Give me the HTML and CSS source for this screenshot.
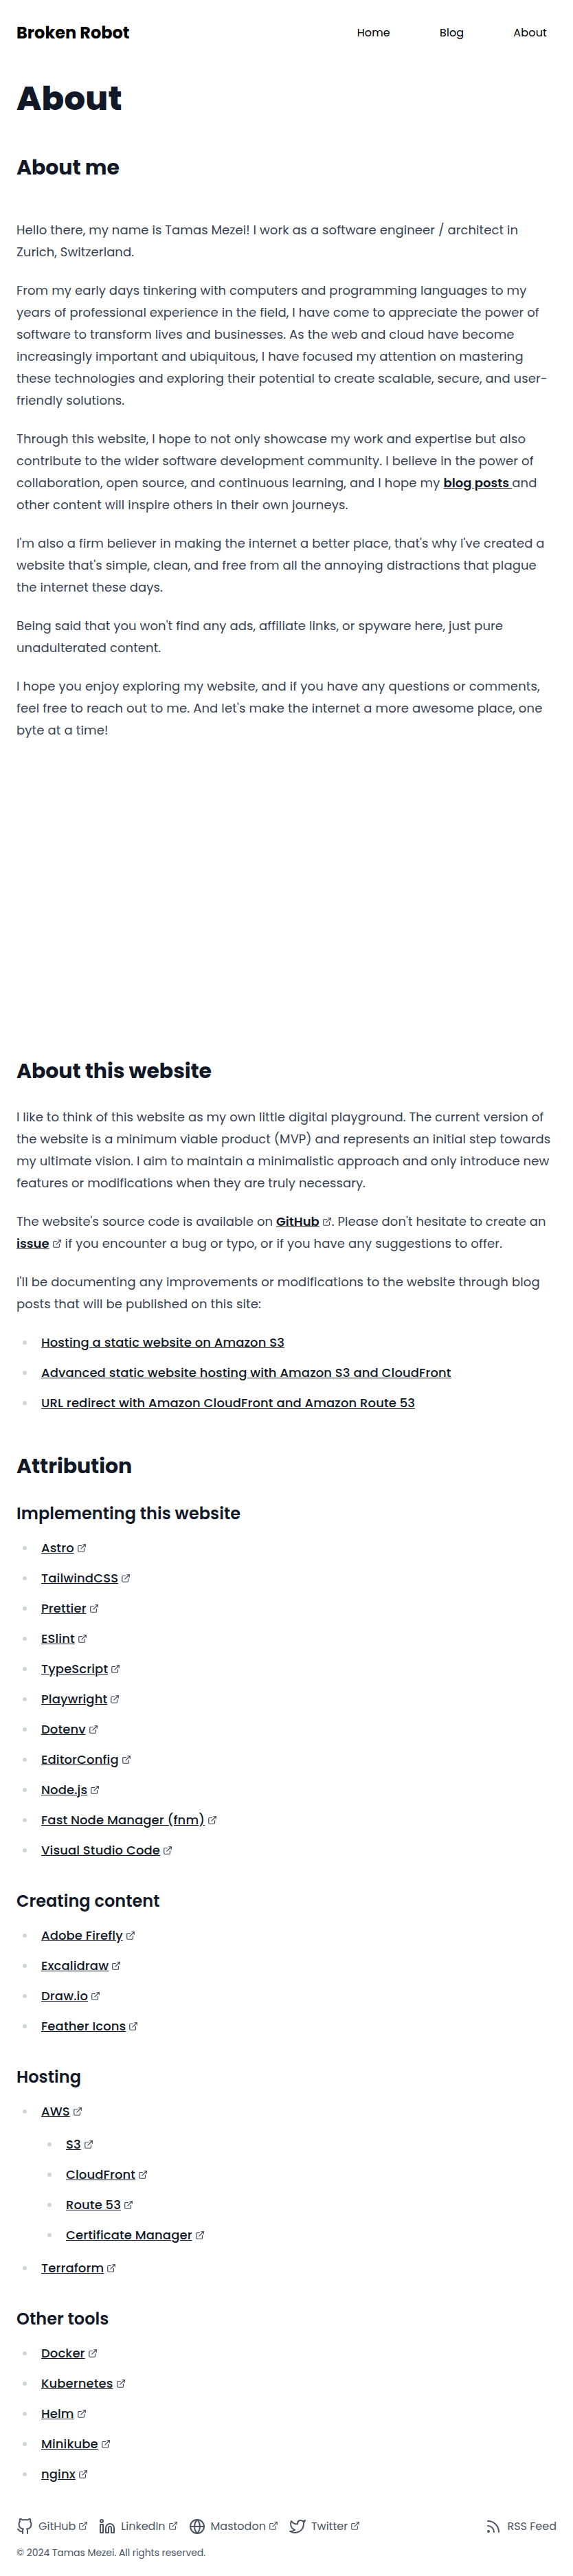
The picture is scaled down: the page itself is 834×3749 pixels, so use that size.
FILE: index.html
```html
<!DOCTYPE html>
<html lang="en">
<head>
<meta charset="utf-8">
<meta name="viewport" content="width=device-width, initial-scale=1">
<title>About | Broken Robot</title>
<link rel="stylesheet" href="styles.css">
</head>
<body>
<svg class="sprite" aria-hidden="true">
  <symbol id="external" viewBox="0 0 24 24"><path d="M18 13v6a2 2 0 0 1-2 2H5a2 2 0 0 1-2-2V8a2 2 0 0 1 2-2h6"/><path d="M15 3h6v6"/><path d="M10 14 21 3"/></symbol>
  <symbol id="github" viewBox="0 0 24 24"><path d="M9 19c-5 1.5-5-2.5-7-3m14 6v-3.87a3.37 3.37 0 0 0-.94-2.61c3.14-.35 6.44-1.54 6.44-7A5.44 5.44 0 0 0 20 4.77 5.07 5.07 0 0 0 19.91 1S18.73.65 16 2.48a13.38 13.38 0 0 0-7 0C6.27.65 5.09 1 5.09 1A5.07 5.07 0 0 0 5 4.77a5.44 5.44 0 0 0-1.5 3.78c0 5.42 3.3 6.61 6.44 7A3.37 3.37 0 0 0 9 18.13V22"/></symbol>
  <symbol id="linkedin" viewBox="0 0 24 24"><path d="M16 8a6 6 0 0 1 6 6v7h-4v-7a2 2 0 0 0-2-2 2 2 0 0 0-2 2v7h-4v-7a6 6 0 0 1 6-6z"/><rect x="2" y="9" width="4" height="12"/><circle cx="4" cy="4" r="2"/></symbol>
  <symbol id="globe" viewBox="0 0 24 24"><circle cx="12" cy="12" r="10"/><path d="M2 12h20"/><path d="M12 2a15.3 15.3 0 0 1 4 10 15.3 15.3 0 0 1-4 10 15.3 15.3 0 0 1-4-10 15.3 15.3 0 0 1 4-10z"/></symbol>
  <symbol id="twitter" viewBox="0 0 24 24"><path d="M23 3a10.9 10.9 0 0 1-3.14 1.53 4.48 4.48 0 0 0-7.86 3v1A10.66 10.66 0 0 1 3 4s-4 9 5 13a11.64 11.64 0 0 1-7 2c9 5 20 0 20-11.5a4.5 4.5 0 0 0-.08-.83A7.72 7.72 0 0 0 23 3z"/></symbol>
  <symbol id="rss" viewBox="0 0 24 24"><path d="M4 11a9 9 0 0 1 9 9"/><path d="M4 4a16 16 0 0 1 16 16"/><circle cx="5" cy="19" r="1"/></symbol>
</svg>

<header class="header">
  <a class="brand" href="#">Broken Robot</a>
  <nav class="nav"><a href="#">Home</a><a href="#">Blog</a><a href="#">About</a></nav>
</header>

<main class="prose">
  <h1>About</h1>
  <h2>About me</h2>
  <section class="intro">
    <p class="snug">Hello there, my name is Tamas Mezei! I work as a software engineer / architect in Zurich, Switzerland.</p>
    <p>From my early days tinkering with computers and programming languages to my years of professional experience in the field, I have come to appreciate the power of software to transform lives and businesses. As the web and cloud have become increasingly important and ubiquitous, I have focused my attention on mastering these technologies and exploring their potential to create scalable, secure, and user-friendly solutions.</p>
    <p class="loose">Through this website, I hope to not only showcase my work and expertise but also contribute to the wider software development community. I believe in the power of collaboration, open source, and continuous learning, and I hope my <a class="strong" href="#">blog posts </a>and other content will inspire others in their own journeys.</p>
    <p>I'm also a firm believer in making the internet a better place, that's why I've created a website that's simple, clean, and free from all the annoying distractions that plague the internet these days.</p>
    <p>Being said that you won't find any ads, affiliate links, or spyware here, just pure unadulterated content.</p>
    <p class="loose">I hope you enjoy exploring my website, and if you have any questions or comments, feel free to reach out to me. And let's make the internet a more awesome place, one byte at a time!</p>
  </section>
  <div class="portrait"></div>

  <h2>About this website</h2>
  <p class="snug">I like to think of this website as my own little digital playground. The current version of the website is a minimum viable product (MVP) and represents an initial step towards my ultimate vision. I aim to maintain a minimalistic approach and only introduce new features or modifications when they are truly necessary.</p>
  <p class="snug">The website's source code is available on <a class="strong" href="#">GitHub</a><svg class="ext"><use href="#external"/></svg>. Please don't hesitate to create an <a class="strong" href="#">issue</a><svg class="ext"><use href="#external"/></svg><span class="loose"> if you encounter a bug or typo, or if you have any suggestions to offer.</span></p>
  <p class="loose">I'll be documenting any improvements or modifications to the website through blog posts that will be published on this site:</p>
  <ul>
    <li><a href="#">Hosting a static website on Amazon S3</a></li>
    <li><a href="#">Advanced static website hosting with Amazon S3 and CloudFront</a></li>
    <li><a href="#">URL redirect with Amazon CloudFront and Amazon Route 53</a></li>
  </ul>

  <h2>Attribution</h2>
  <h3>Implementing this website</h3>
  <ul>
    <li><a href="#">Astro</a><svg class="ext"><use href="#external"/></svg></li>
    <li><a href="#">TailwindCSS</a><svg class="ext"><use href="#external"/></svg></li>
    <li><a href="#">Prettier</a><svg class="ext"><use href="#external"/></svg></li>
    <li><a href="#">ESlint</a><svg class="ext"><use href="#external"/></svg></li>
    <li><a href="#">TypeScript</a><svg class="ext"><use href="#external"/></svg></li>
    <li><a href="#">Playwright</a><svg class="ext"><use href="#external"/></svg></li>
    <li><a href="#">Dotenv</a><svg class="ext"><use href="#external"/></svg></li>
    <li><a href="#">EditorConfig</a><svg class="ext"><use href="#external"/></svg></li>
    <li><a href="#">Node.js</a><svg class="ext"><use href="#external"/></svg></li>
    <li><a href="#">Fast Node Manager (fnm)</a><svg class="ext"><use href="#external"/></svg></li>
    <li><a href="#">Visual Studio Code</a><svg class="ext"><use href="#external"/></svg></li>
  </ul>

  <h3>Creating content</h3>
  <ul>
    <li><a href="#">Adobe Firefly</a><svg class="ext"><use href="#external"/></svg></li>
    <li><a href="#">Excalidraw</a><svg class="ext"><use href="#external"/></svg></li>
    <li><a href="#">Draw.io</a><svg class="ext"><use href="#external"/></svg></li>
    <li><a href="#">Feather Icons</a><svg class="ext"><use href="#external"/></svg></li>
  </ul>

  <h3>Hosting</h3>
  <ul>
    <li><a href="#">AWS</a><svg class="ext"><use href="#external"/></svg>
      <ul>
        <li><a href="#">S3</a><svg class="ext"><use href="#external"/></svg></li>
        <li><a href="#">CloudFront</a><svg class="ext"><use href="#external"/></svg></li>
        <li><a href="#">Route 53</a><svg class="ext"><use href="#external"/></svg></li>
        <li><a href="#">Certificate Manager</a><svg class="ext"><use href="#external"/></svg></li>
      </ul>
    </li>
    <li><a href="#">Terraform</a><svg class="ext"><use href="#external"/></svg></li>
  </ul>

  <h3>Other tools</h3>
  <ul>
    <li><a href="#">Docker</a><svg class="ext"><use href="#external"/></svg></li>
    <li><a href="#">Kubernetes</a><svg class="ext"><use href="#external"/></svg></li>
    <li><a href="#">Helm</a><svg class="ext"><use href="#external"/></svg></li>
    <li><a href="#">Minikube</a><svg class="ext"><use href="#external"/></svg></li>
    <li><a href="#">nginx</a><svg class="ext"><use href="#external"/></svg></li>
  </ul>
</main>

<footer class="footer">
  <div class="social">
    <a href="#"><svg class="icon"><use href="#github"/></svg><span>GitHub<svg class="ext"><use href="#external"/></svg></span></a>
    <a href="#"><svg class="icon"><use href="#linkedin"/></svg><span>LinkedIn<svg class="ext"><use href="#external"/></svg></span></a>
    <a href="#"><svg class="icon"><use href="#globe"/></svg><span>Mastodon<svg class="ext"><use href="#external"/></svg></span></a>
    <a href="#"><svg class="icon"><use href="#twitter"/></svg><span>Twitter<svg class="ext"><use href="#external"/></svg></span></a>
    <a class="feed" href="#"><svg class="icon"><use href="#rss"/></svg><span>RSS Feed</span></a>
  </div>
  <p class="copyright">© 2024 Tamas Mezei. All rights reserved.</p>
</footer>
</body>
</html>
```
FILE: styles.css
```css
*, *::before, *::after { box-sizing: border-box; }

body {
  margin: 0;
  padding: 0 24px;
  background: #fff;
  color: #000;
  font-family: Poppins, Inter, "Open Sans", sans-serif;
  font-size: 16px;
  line-height: 24px;
}

h1, h2, h3, p, ul { margin: 0; padding: 0; }
a { color: inherit; text-decoration: none; }

.sprite { position: absolute; width: 0; height: 0; }

svg {
  fill: none;
  stroke: currentColor;
  stroke-width: 2;
  stroke-linecap: round;
  stroke-linejoin: round;
}

.header {
  display: flex;
  align-items: center;
  justify-content: space-between;
  height: 95px;
}
.brand { font-size: 24px; line-height: 32px; font-weight: 700; }
.nav { display: flex; gap: 72px; padding-right: 14px; letter-spacing: 0.15px; }

.prose {
  padding-top: 25px;
  color: #374151;
  font-size: 18px;
  line-height: 32px;
}
.prose h1, .prose h2, .prose h3 { color: #111827; }
.prose h1 { font-size: 48px; line-height: 48px; font-weight: 800; letter-spacing: 0.3px; }
.prose h2 { margin: 56px 0 31px; font-size: 30px; line-height: 40px; font-weight: 700; letter-spacing: -0.1px; }
.prose h3 { margin: 40px 0 16px; font-size: 24px; line-height: 36px; font-weight: 600; letter-spacing: 0.04px; }
.prose h2 + h3 { margin-top: 0; }
.prose p { margin: 24px 0; letter-spacing: 0.095px; }
.prose p.snug { letter-spacing: 0.07px; }
.prose .loose { letter-spacing: 0.14px; }
.prose a {
  color: #111827;
  font-weight: 500;
  text-decoration: underline;
}
.prose li { letter-spacing: 0.1px; }
.prose a.strong { font-weight: 600; letter-spacing: 0; }

.intro p:first-child { margin-top: 55px; }
.portrait { height: 380px; }

.prose ul { margin: 24px 0; padding-left: 28px; list-style: none; }
.prose h3 + ul { margin-top: 16px; }
.prose li { position: relative; margin: 12px 0; padding-left: 8px; }
.prose li ul { margin: 16px 0; }
.prose ul > li:first-child { margin-top: 0; }
.prose ul > li:last-child { margin-bottom: 0; }
.prose li::before {
  content: "";
  position: absolute;
  left: -19px;
  top: 13px;
  width: 6px;
  height: 6px;
  border-radius: 50%;
  background: #d1d5db;
}

.ext {
  display: inline-block;
  width: 14px;
  height: 14px;
  margin-left: 4px;
  vertical-align: -1px;
}

.footer { padding-top: 24px; color: #4b5563; }
.social { display: flex; align-items: center; gap: 16px; }
.social a { display: flex; align-items: center; gap: 8px; }
.social .feed { margin-left: auto; }
.icon { display: block; width: 24px; height: 24px; }
.copyright { margin-top: 16px; font-size: 14px; line-height: 20px; letter-spacing: -0.06px; }
```
